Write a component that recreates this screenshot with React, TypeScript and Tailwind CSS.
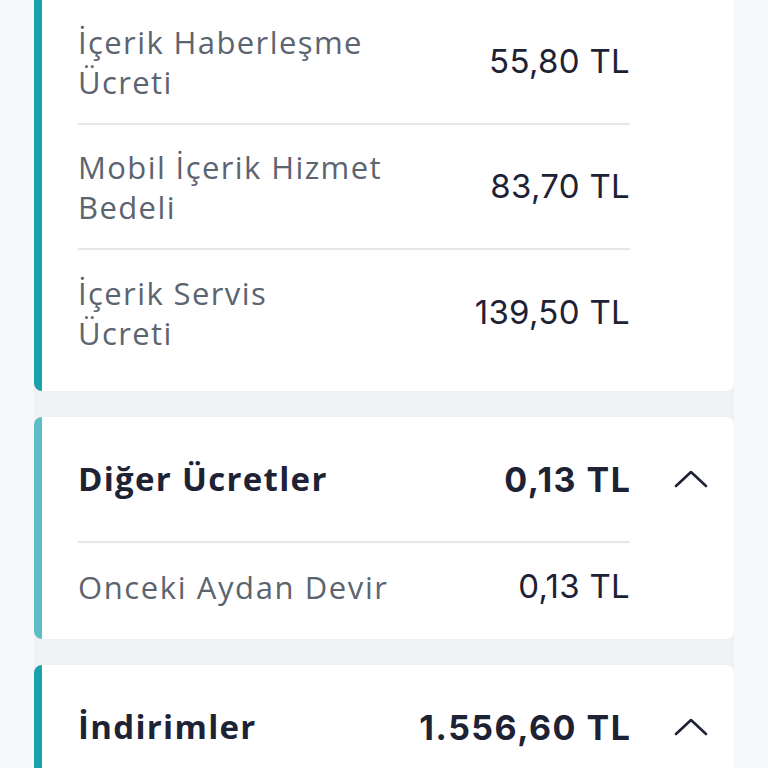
import { ReactNode } from 'react';

const rows = [
  { label: ['İçerik Haberleşme', 'Ücreti'], value: '55,80 TL' },
  { label: ['Mobil İçerik Hizmet', 'Bedeli'], value: '83,70 TL' },
  { label: ['İçerik Servis', 'Ücreti'], value: '139,50 TL' },
];

const Chevron = () => (
  <svg width="34" height="20" viewBox="0 0 34 20" fill="none">
    <polyline points="2,17 17,3 32,17" stroke="#1e2235" strokeWidth="2.6" strokeLinecap="round" strokeLinejoin="round" />
  </svg>
);

const Card = ({ children, border, className = '' }: { children: ReactNode; border: string; className?: string }) => (
  <div className={`bg-white border-l-[8px] ${border} ${className}`}>{children}</div>
);

const Header = ({ title, value }: { title: string; value: string }) => (
  <div className="flex items-center h-[124px] pl-9">
    <div className="flex-1 text-[33px] font-bold text-[#1e2235] font-['Open_Sans',sans-serif] tracking-[1.3px]">{title}</div>
    <div className="text-[34px] font-bold text-[#1e2235] font-['Inter',sans-serif] tracking-[1.5px] -mr-[1.5px]">{value}</div>
    <div className="w-[104px] flex justify-end pr-[26px]">
      <Chevron />
    </div>
  </div>
);

export default function App() {
  return (
    <div className="min-h-[768px] h-[768px] overflow-hidden bg-[#f7f8fa]">
      <div className="ml-[34px] w-[700px] bg-[#f0f1f3] flex flex-col gap-[26px]">
        <Card border="border-[#17a2ad]" className="rounded-b-lg">
          <div className="pl-9 pr-[104px]">
            {rows.map((r, i) => (
              <div
                key={i}
                className={`flex items-center justify-between ${i < rows.length - 1 ? 'h-[125px] border-b-2 border-[#e6e7e9]' : 'h-[141px] pb-[16px]'}`}
              >
                <div className="text-[31px] leading-[40px] text-[#5c6470] font-['Open_Sans',sans-serif] tracking-[1.4px]">
                  {r.label[0]}
                  <br />
                  {r.label[1]}
                </div>
                <div className="text-[33px] text-[#1e2235] font-['Inter',sans-serif] tracking-[0.3px]">{r.value}</div>
              </div>
            ))}
          </div>
        </Card>

        <Card border="border-[#5dbdc6]" className="rounded-lg">
          <Header title="Diğer Ücretler" value="0,13 TL" />
          <div className="pl-9 pr-[104px]">
            <div className="flex items-center justify-between h-[98px] border-t-2 border-[#e6e7e9] pb-[8px]">
              <div className="text-[31px] text-[#5c6470] font-['Open_Sans',sans-serif] tracking-[1.6px]">Onceki Aydan Devir</div>
              <div className="text-[33px] text-[#1e2235] font-['Inter',sans-serif] tracking-[0.3px]">0,13 TL</div>
            </div>
          </div>
        </Card>

        <Card border="border-[#17a2ad]" className="rounded-t-lg h-[200px]">
          <Header title="İndirimler" value="1.556,60 TL" />
        </Card>
      </div>
    </div>
  );
}
